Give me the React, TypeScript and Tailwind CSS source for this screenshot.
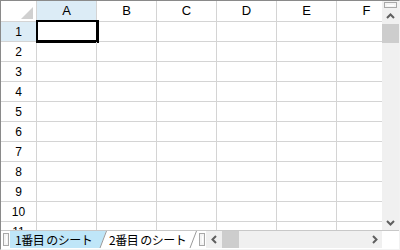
import React from 'react'

// ─── sheet data ───
const COLUMNS = ['A', 'B', 'C', 'D', 'E', 'F']
const ROWS = [1, 2, 3, 4, 5, 6, 7, 8, 9, 10, 11]

const Chevron = ({ dir }: { dir: 'up' | 'down' | 'left' | 'right' }) => {
  const pts = {
    up: '1,6 4.5,2.5 8,6',
    down: '1,3 4.5,6.5 8,3',
    left: '6,1 2.5,4.5 6,8',
    right: '3,1 6.5,4.5 3,8',
  }[dir]
  return (
    <svg width="9" height="9" viewBox="0 0 9 9">
      <polyline points={pts} fill="none" stroke="#5f5f5f" strokeWidth="2" />
    </svg>
  )
}

// little split box drawn on scrollbar ends
const SplitBox = ({ vertical }: { vertical?: boolean }) =>
  vertical ? (
    <div className="mx-[2px] mt-[1px] h-[6px] border border-[#a8a8a8] bg-[#f4f4f4] flex items-center px-[2px]">
      <div className="h-px w-full bg-white" />
    </div>
  ) : (
    <div className="my-[2px] ml-[2px] w-[6px] border border-[#a8a8a8] bg-[#f4f4f4] flex justify-center py-[2px]">
      <div className="w-px h-full bg-white" />
    </div>
  )

const TabEdge = ({ fill }: { fill: string }) => (
  <svg width="8" height="17" viewBox="0 0 8 17" className="shrink-0">
    <polygon points="0,0 7,0 1,17 0,17" fill={fill} />
    <line x1="1" y1="17" x2="7.5" y2="0" stroke="#9a9a9a" strokeWidth="1" />
  </svg>
)

export default function App() {
  return (
    <div
      className="w-[400px] h-[250px] flex flex-col border border-t-[#8a8a8a] border-l-[#8a8a8a] border-r-[#f2f2f2] border-b-[#f2f2f2] bg-white overflow-hidden"
      style={{ fontFamily: '"Liberation Sans", Arial, sans-serif' }}
    >
      {/* grid + vertical scrollbar */}
      <div className="flex h-[230px] border-b border-[#c8c8c8]">
        <div className="w-[381px] overflow-hidden">
          {/* column header */}
          <div className="flex h-[21px] border-b border-[#d4d4d4]">
            <div className="w-[36px] shrink-0 border-r border-[#d4d4d4] flex items-end justify-end pr-[3px] pb-[2px]">
              <svg width="12" height="12" viewBox="0 0 12 12">
                <polygon points="12,0 12,12 0,12" fill="#d0d0d0" />
              </svg>
            </div>
            {COLUMNS.map(c => (
              <div
                key={c}
                className={`w-[60px] shrink-0 border-r border-[#d4d4d4] flex items-center justify-center text-[13px] text-black ${c === 'A' ? 'bg-[#dcecf6]' : ''}`}
              >
                {c}
              </div>
            ))}
          </div>
          {/* rows */}
          {ROWS.map(r => (
            <div key={r} className="flex h-[20px] border-b border-[#d4d4d4]">
              <div
                className={`w-[36px] shrink-0 border-r border-[#d4d4d4] flex items-center justify-center text-[12px] text-black ${r === 1 ? 'bg-[#dcecf6]' : ''}`}
              >
                {r}
              </div>
              {COLUMNS.map(c => (
                <div key={c} className="relative w-[60px] shrink-0 border-r border-[#d4d4d4]">
                  {r === 1 && c === 'A' && (
                    <div className="absolute -left-px -top-[2px] w-[63px] h-[23px] border-t-2 border-l-2 border-r-[3px] border-b-[3px] border-black" />
                  )}
                </div>
              ))}
            </div>
          ))}
        </div>
        {/* vertical scrollbar */}
        <div className="w-[17px] bg-[#f0f0f0] flex flex-col">
          <SplitBox vertical />
          <div className="h-[16px] flex items-center justify-center">
            <Chevron dir="up" />
          </div>
          <div className="h-[19px] bg-[#cdcdcd]" />
          <div className="flex-1" />
          <div className="h-[16px] flex items-center justify-center">
            <Chevron dir="down" />
          </div>
        </div>
      </div>

      {/* sheet tabs + horizontal scrollbar */}
      <div className="flex h-[17px]">
        <SplitBox />
        <div className="flex items-stretch ml-[1px]" style={{ fontFamily: '"Noto Sans CJK JP", sans-serif' }}>
          <div className="w-[89px] bg-[#bfe6f8] flex items-center pl-[5px] text-[12px] leading-none text-black tracking-[-0.5px] whitespace-pre">
            1番目 のシート
          </div>
          <TabEdge fill="#bfe6f8" />
          <div className="w-[82px] bg-white flex items-center pl-[2px] text-[12px] leading-none text-black tracking-[-0.5px] whitespace-pre">
            2番目 のシート
          </div>
          <TabEdge fill="#ffffff" />
        </div>
        <SplitBox />
        <div className="flex-1 bg-[#f0f0f0] flex items-center ml-[1px]">
          <div className="w-[16px] h-full flex items-center justify-center">
            <Chevron dir="left" />
          </div>
          <div className="w-[17px] h-full bg-[#cdcdcd]" />
          <div className="flex-1" />
          <div className="w-[16px] h-full flex items-center justify-center">
            <Chevron dir="right" />
          </div>
        </div>
        <div className="w-[17px] bg-white" />
      </div>
    </div>
  )
}
